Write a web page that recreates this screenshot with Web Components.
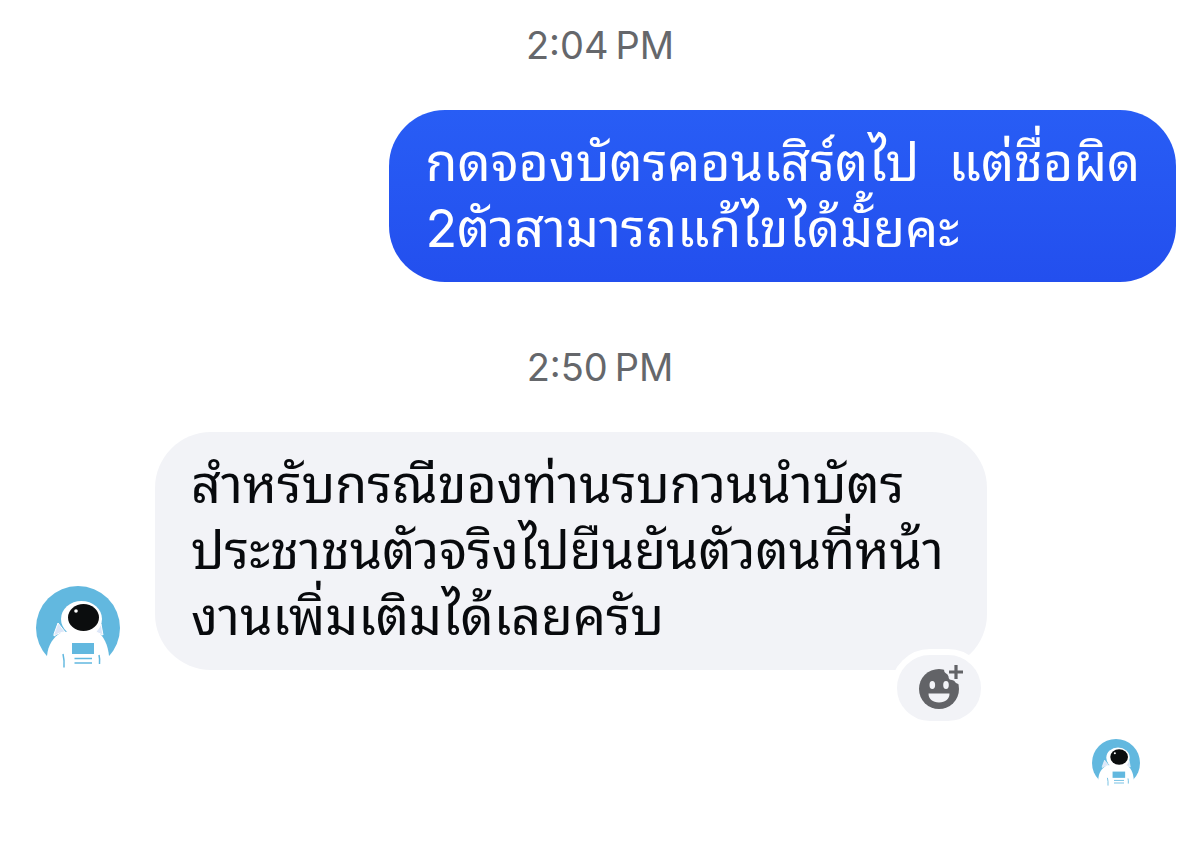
<!DOCTYPE html>
<html lang="th">
<head>
<meta charset="utf-8">
<meta name="viewport" content="width=device-width, initial-scale=1">
<title>Chat</title>
<style>
  :root {
    --bubble-out: linear-gradient(#285df5, #234fee);
    --bubble-in: #f2f3f7;
    --text-01: #080a0d;
    --text-02: #65676b;
    --accent: #62b8df;
    --chat-font: Inter, "Noto Sans Thai Looped", "Loma", "Garuda", "Waree", "Laksaman", "Sarabun", "FreeSans", "Droid Sans Thai", "FreeSerif", "Noto Serif Thai", sans-serif;
  }

  body {
    margin: 0;
    background: #ffffff;
    font-family: var(--chat-font);
  }
</style>
</head>
<body>
<chat-thread>
  <chat-time>2:04&#8239;PM</chat-time>
  <chat-message type="outgoing">กดจองบัตรคอนเสิร์ตไป&nbsp; แต่ชื่อผิด<br>2ตัวสามารถแก้ไขได้มั้ยคะ</chat-message>
  <chat-time>2:50&#8239;PM</chat-time>
  <chat-message type="incoming">
    <chat-avatar slot="avatar"></chat-avatar>
    สำหรับกรณีของท่านรบกวนนำบัตร<br>ประชาชนตัวจริงไปยืนยันตัวตนที่หน้า<br>งานเพิ่มเติมได้เลยครับ
    <chat-reaction slot="reaction"></chat-reaction>
  </chat-message>
  <chat-avatar slot="receipt" size="small"></chat-avatar>
</chat-thread>

<script>
class ChatThread extends HTMLElement {
  constructor() {
    super();
    this.attachShadow({mode: 'open'});
  }

  connectedCallback() {
    this.shadowRoot.innerHTML = `
      <style>
        :host {
          display: block;
        }

        .thread {
          display: flex;
          flex-direction: column;
          padding: 21px 24px 0 36px;
        }

        .receipt {
          display: flex;
          justify-content: flex-end;
          padding: 69px 36px 53px;
        }
      </style>
      <main class="thread">
        <slot></slot>
        <div class="receipt"><slot name="receipt"></slot></div>
      </main>
    `;
  }
}

class ChatTime extends HTMLElement {
  constructor() {
    super();
    this.attachShadow({mode: 'open'});
  }

  connectedCallback() {
    this.shadowRoot.innerHTML = `
      <style>
        :host {
          display: block;
          margin: 0 0 41px -12px;
          color: var(--text-02);
          font-size: 38px;
          line-height: 48px;
          text-align: center;
        }
      </style>
      <time><slot></slot></time>
    `;
  }
}

class ChatMessage extends HTMLElement {
  constructor() {
    super();
    this.attachShadow({mode: 'open'});
  }

  connectedCallback() {
    this.shadowRoot.innerHTML = `
      <style>
        :host {
          display: flex;
          align-items: flex-end;
          gap: 35px;
        }

        :host([type="outgoing"]) {
          justify-content: flex-end;
          margin-bottom: 61px;
        }

        .bubble {
          position: relative;
          box-sizing: border-box;
          width: 73%;
          padding: 20px 36px;
          border-radius: 56px;
          background: var(--bubble-in);
          color: var(--text-01);
          font-size: 52px;
          line-height: 66px;
          white-space: nowrap;
        }

        :host([type="outgoing"]) .bubble {
          width: 69%;
          background: var(--bubble-out);
          color: #ffffff;
        }

        ::slotted([slot="reaction"]) {
          position: absolute;
          right: 0;
          bottom: -57px;
        }
      </style>
      <slot name="avatar"></slot>
      <div class="bubble">
        <slot></slot>
        <slot name="reaction"></slot>
      </div>
    `;
  }
}

class ChatAvatar extends HTMLElement {
  constructor() {
    super();
    this.attachShadow({mode: 'open'});
  }

  connectedCallback() {
    this.shadowRoot.innerHTML = `
      <style>
        :host {
          display: block;
          flex: none;
          width: 84px;
          height: 84px;
        }

        :host([size="small"]) {
          width: 48px;
          height: 48px;
        }

        svg {
          display: block;
          width: 100%;
          height: 100%;
          overflow: visible;
        }
      </style>
      <svg viewBox="0 0 84 84" aria-hidden="true">
        <circle cx="42" cy="42" r="42" fill="var(--accent)"/>
        <path d="M10 86 11 70C12 59 17 51 26 46L60 44C68 50 72 59 73 70L74 86z" fill="#fff"/>
        <path d="M18 48 22 37 29 46C25 46 21 48 18 50zM60 46 65 38 67 49z" fill="#dce6f8" stroke="#fff"/>
        <ellipse cx="45.500" cy="33" rx="20.500" ry="18" fill="#fff"/>
        <ellipse cx="47.500" cy="31.500" rx="15.500" ry="13.500" fill="#0b0d0e"/>
        <circle cx="40" cy="25" r="1.800" fill="#fff"/>
        <path d="M36 57h22v11H36z" fill="var(--accent)"/>
        <path d="M38.500 72.500h17.500M38.500 77h17.500M27 68q1.500 6 1 13.500M63 69q1 4 .5 9" fill="none" stroke="var(--accent)" stroke-width="1.500"/>
      </svg>
    `;
  }
}

class ChatReaction extends HTMLElement {
  constructor() {
    super();
    this.attachShadow({mode: 'open'});
  }

  connectedCallback() {
    this.shadowRoot.innerHTML = `
      <style>
        :host {
          display: block;
        }

        button {
          display: flex;
          align-items: center;
          justify-content: center;
          box-sizing: border-box;
          width: 96px;
          height: 78px;
          padding: 0;
          border: 6px solid #ffffff;
          border-radius: 39px;
          background: var(--bubble-in);
          color: #626367;
          cursor: pointer;
        }

        svg {
          width: 48px;
          height: 48px;
          overflow: visible;
        }
      </style>
      <button type="button" aria-label="เพิ่มความรู้สึก">
        <svg viewBox="0 0 48 48" aria-hidden="true">
          <circle cx="24" cy="25" r="20" fill="currentColor"/>
          <path d="M28 1H50V18L46 19Q43 21 40.500 18.500Q39.500 16 37 16Q33.500 16 33.500 12.500Q33 10 30.500 9Q28 7 30 4z" fill="var(--bubble-in)"/>
          <path d="M41 1v14M34 8h14" stroke="currentColor" stroke-width="3.200"/>
          <ellipse cx="17.300" cy="21" rx="2.800" ry="4" fill="var(--bubble-in)"/>
          <ellipse cx="31" cy="21" rx="2.800" ry="4" fill="var(--bubble-in)"/>
          <path d="M13.500 29.500h21c0 5.500-4 9-10.500 9s-10.500-3.500-10.500-9z" fill="var(--bubble-in)"/>
        </svg>
      </button>
    `;
  }
}

customElements.define('chat-thread', ChatThread);
customElements.define('chat-time', ChatTime);
customElements.define('chat-message', ChatMessage);
customElements.define('chat-avatar', ChatAvatar);
customElements.define('chat-reaction', ChatReaction);
</script>
</body>
</html>
